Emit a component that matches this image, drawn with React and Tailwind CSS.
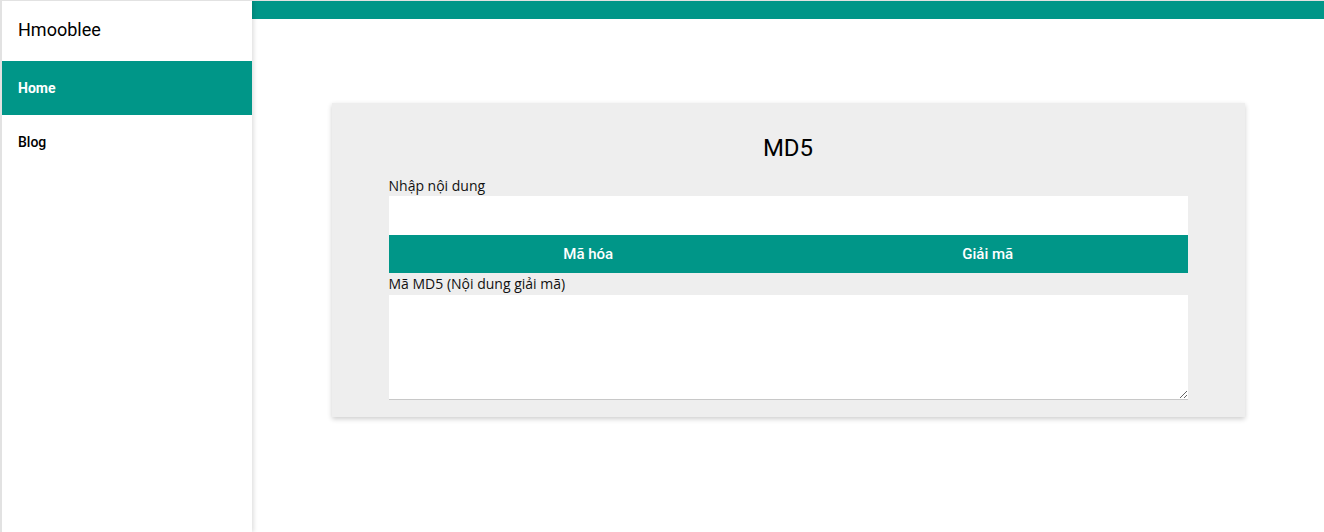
import React, { useState } from 'react';

const App = () => {
  const [input, setInput] = useState('');
  const [output, setOutput] = useState('');

  return (
    <div className="flex h-[532px] w-[1324px] overflow-hidden bg-white border-l-2 border-t border-[#e2e2e2] font-['Roboto',sans-serif]">
      {/* Sidebar */}
      <aside className="w-[250px] shrink-0 bg-white shadow-[2px_0_4px_rgba(0,0,0,0.12)] z-10">
        <div className="h-[60px] flex items-center px-4 pb-1 text-[18px] text-black">Hmooblee</div>
        <a className="h-[54px] flex items-center px-4 bg-[#009688] text-white text-[14px] font-bold">Home</a>
        <a className="h-[54px] flex items-center px-4 text-black text-[14px] font-medium">Blog</a>
      </aside>

      {/* Main */}
      <main className="flex-1 flex flex-col">
        <div className="h-[18px] bg-[#009688]" />
        <div className="flex justify-center pt-[84px]">
          <div className="w-[913px] bg-[#eeeeee] shadow-[0_2px_5px_rgba(0,0,0,0.2)] px-[57px] pt-[29px] pb-[17px]">
            <h3 className="text-center text-[24px] leading-8 text-black">MD5</h3>
            <label className="block mt-3 text-[14px] leading-[20px] text-[#111] font-['Open_Sans',sans-serif]">Nhập nội dung</label>
            <input
              value={input}
              onChange={(e) => setInput(e.target.value)}
              className="block w-full h-[39px] bg-white outline-none px-2 text-[15px]"
            />
            <div className="flex h-[38px]">
              <button className="flex-1 bg-[#009688] text-white text-[15px] font-medium">Mã hóa</button>
              <button className="flex-1 bg-[#009688] text-white text-[15px] font-medium">Giải mã</button>
            </div>
            <label className="block text-[14px] leading-[22px] text-[#111] font-['Open_Sans',sans-serif]">Mã MD5 (Nội dung giải mã)</label>
            <textarea
              value={output}
              onChange={(e) => setOutput(e.target.value)}
              className="block w-full h-[105px] bg-white border-b border-[#c8c8c8] outline-none p-2 text-[15px]"
            />
          </div>
        </div>
      </main>
    </div>
  );
};

export default App;
